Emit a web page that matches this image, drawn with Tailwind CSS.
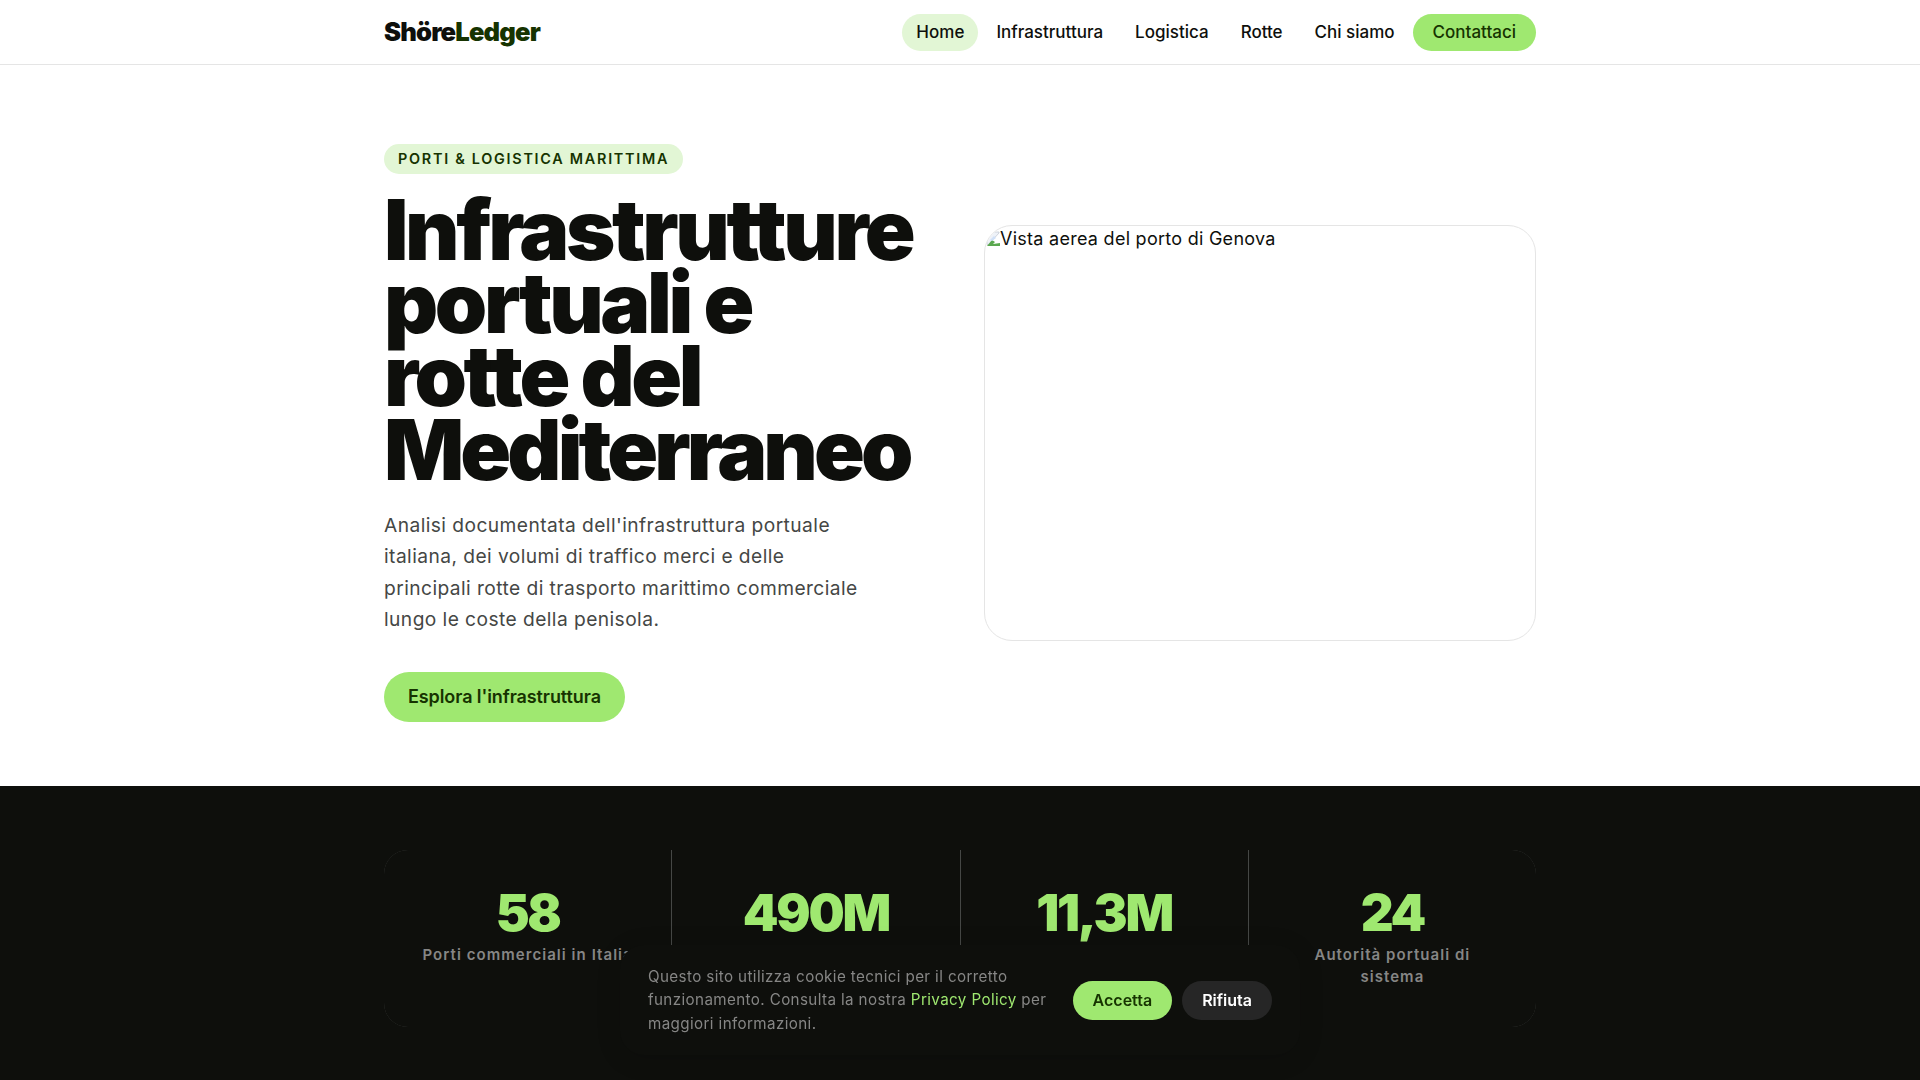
<!DOCTYPE html>
<html lang="it">

<head>
  <meta charset="UTF-8" />
  <title>ShöreLedger</title>
  <script src="https://cdn.jsdelivr.net/npm/@tailwindcss/browser@4"></script>
</head>

<body class="bg-white text-[#0e0f0c] font-['Inter',sans-serif]">

  <!-- Nav -->
  <header class="border-b border-[#e5e5e5] bg-white">
    <nav class="max-w-[1152px] mx-auto h-16 flex items-center justify-between">
      <a class="text-[25.6px] font-black tracking-[-0.033em]">Shöre<span class="text-[#163300]">Ledger</span></a>
      <div class="flex items-center gap-1 text-[17px] leading-[23px] font-medium">
        <a class="px-[14px] py-[7px] rounded-full bg-[#e2f6d5]">Home</a>
        <a class="px-[14px] py-[7px] rounded-full">Infrastruttura</a>
        <a class="px-[14px] py-[7px] rounded-full">Logistica</a>
        <a class="px-[14px] py-[7px] rounded-full">Rotte</a>
        <a class="px-[14px] py-[7px] rounded-full">Chi siamo</a>
        <a class="px-5 py-[7px] rounded-full bg-[#9fe870] text-[#163300]">Contattaci</a>
      </div>
    </nav>
  </header>

  <!-- Hero -->
  <section class="max-w-[1152px] mx-auto pt-[79px] pb-16 grid grid-cols-2 gap-12 items-center">
    <div>
      <span class="block w-fit px-[14px] py-[5px] rounded-full bg-[#e2f6d5] text-[#163300] text-[14.4px] leading-[20px] font-semibold tracking-[0.12em]">PORTI &amp; LOGISTICA MARITTIMA</span>
      <h1 class="mt-[19px] text-[84px] leading-[73.2px] font-black tracking-[-0.04em]">Infrastrutture portuali e rotte del <span class="tracking-[-0.047em]">Mediterraneo</span></h1>
      <p class="mt-[24px] max-w-[480px] text-[19.2px] leading-[31.4px] tracking-[0.0225em] text-[#454745]">Analisi documentata dell'infrastruttura portuale italiana, dei volumi di traffico merci e delle principali rotte di trasporto marittimo commerciale lungo le coste della penisola.</p>
      <a class="block w-fit mt-[37px] px-6 py-[11px] rounded-full bg-[#9fe870] text-[#163300] text-[18px] leading-[28px] font-semibold tracking-[-0.005em]">Esplora l'infrastruttura</a>
    </div>
    <div class="h-[416px] border border-[#e5e5e5] rounded-[28px] overflow-hidden text-[18px] leading-[26px] tracking-[0.015em]">
      <svg class="inline-block align-[-2px] ml-[1px]" width="14" height="16" viewBox="0 0 14 16">
        <path d="M1 13V6L7 1h6v1L2 14z" fill="#eef2f8" stroke="#c4c9d2" stroke-width="0.8" />
        <path d="M1 15l5-6 3 2-2 2 7-1v3z" fill="#5aa84f" />
        <path d="M4 9l4-4 2 2-4 3z" fill="#cfe0f7" />
      </svg><span>Vista aerea del porto di Genova</span>
    </div>
  </section>

  <!-- Statistiche -->
  <section class="bg-[#0e0f0c] py-16">
    <div class="max-w-[1152px] mx-auto grid grid-cols-4 gap-px bg-[#454745] rounded-[24px] overflow-hidden">
      <div class="bg-[#0e0f0c] px-[35px] pt-[37px] pb-[39px] text-center">
        <div class="text-[51px] leading-[51px] font-black tracking-[-0.045em] text-[#9fe870]">58</div>
        <div class="mt-[6px] text-[15px] leading-[22px] font-semibold tracking-[0.07em] text-[#868685]">Porti commerciali in Italia</div>
      </div>
      <div class="bg-[#0e0f0c] px-[35px] pt-[37px] pb-[39px] text-center">
        <div class="text-[51px] leading-[51px] font-black tracking-[-0.045em] text-[#9fe870]">490M</div>
      </div>
      <div class="bg-[#0e0f0c] px-[35px] pt-[37px] pb-[39px] text-center">
        <div class="text-[51px] leading-[51px] font-black tracking-[-0.045em] text-[#9fe870]">11,3M</div>
      </div>
      <div class="bg-[#0e0f0c] px-[35px] pt-[37px] pb-[39px] text-center">
        <div class="text-[51px] leading-[51px] font-black tracking-[-0.045em] text-[#9fe870]">24</div>
        <div class="mt-[6px] text-[15px] leading-[22px] font-semibold tracking-[0.07em] text-[#868685]">Autorità portuali di sistema</div>
      </div>
    </div>
  </section>

  <!-- Banner cookie -->
  <div class="fixed bottom-[25px] left-1/2 -translate-x-1/2 w-[680px] px-7 py-5 flex items-center gap-6 rounded-[24px] bg-[#0e0f0c] shadow-[0_4px_24px_rgba(0,0,0,0.15)]">
    <p class="flex-1 text-[15.2px] leading-[23.4px] tracking-[0.025em] text-[#868685]">Questo sito utilizza cookie tecnici per il corretto funzionamento. Consulta la nostra <a class="text-[#9fe870]">Privacy Policy</a> per maggiori informazioni.</p>
    <div class="flex gap-[10px] shrink-0 mt-[2px] text-[16px] leading-[23px] font-semibold">
      <button class="px-5 py-2 rounded-full bg-[#9fe870] text-[#163300]">Accetta</button>
      <button class="px-5 py-2 rounded-full bg-[#262626] text-white">Rifiuta</button>
    </div>
  </div>

</body>

</html>
